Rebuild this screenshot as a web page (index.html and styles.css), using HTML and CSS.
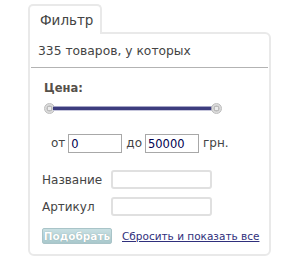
FILE: index.html
```html
<!DOCTYPE html>
<html>
<head>
<meta charset="utf-8">
<link rel="stylesheet" href="styles.css">
</head>
<body>
<div class="filter">
  <div class="tab">Фильтр</div>
  <div class="panel">
    <div class="count">335 товаров, у которых</div>
    <div class="price">
      <div class="price-label">Цена:</div>
      <div class="slider"><span class="knob"></span><span class="track"></span><span class="knob"></span></div>
      <div class="range">
        <span class="rl">от</span>
        <input class="num" type="text" value="0">
        <span class="rl">до</span>
        <input class="num" type="text" value="50000">
        <span class="rl">грн.</span>
      </div>
    </div>
    <div class="fields">
      <label class="flabel">Название</label><input class="field" type="text">
      <label class="flabel">Артикул</label><input class="field" type="text">
    </div>
    <div class="actions">
      <button class="btn" type="button">Подобрать</button>
      <a class="reset" href="#">Сбросить и показать все</a>
    </div>
  </div>
</div>
</body>
</html>
```

FILE: styles.css
```css
* { box-sizing: border-box; }
html, body { margin: 0; padding: 0; background: #fff; }
body { font-family: "DejaVu Sans", Verdana, sans-serif; color: #444; }

.filter { width: 243px; margin: 4px 0 0 28px; }

.tab {
  position: relative;
  z-index: 1;
  display: inline-block;
  width: 74px;
  height: 30px;
  margin-bottom: -2px;
  padding: 6px 0 0 10px;
  border: 2px solid #e9e9e9;
  border-bottom: none;
  border-radius: 5px 5px 0 0;
  background: #fff;
  font-size: 13.5px;
  line-height: 16px;
  color: #444;
}

.panel {
  height: 224px;
  border: 2px solid #e9e9e9;
  border-radius: 0 6px 6px 6px;
  padding: 10px 1px 0 1px;
}

.count {
  font-size: 12.3px;
  line-height: 15px;
  padding-left: 7px;
  padding-bottom: 8px;
  border-bottom: 1px solid #b3b3b3;
}

.price { padding: 13px 0 0 13px; }
.price-label {
  font-size: 11.5px;
  font-weight: bold;
  line-height: 14px;
  color: #555049;
}

.slider {
  display: flex;
  align-items: center;
  width: 178px;
  height: 12px;
  margin-top: 7px;
}
.knob {
  flex: none;
  width: 11px;
  height: 11px;
  border-radius: 50%;
  border: 1px solid #bdbdbd;
  background: radial-gradient(circle, #ececec 0 1.5px, #bcbcbc 2px 2.8px, #dcdcdc 3.3px);
}
.track {
  flex: 1;
  height: 5px;
  margin: 0 -2px;
  background: #3d3d7e;
  border-top: 1px solid #a5a5c6;
  border-bottom: 1px solid #c6c6dc;
}

.range {
  display: flex;
  align-items: center;
  margin-top: 20px;
  padding-left: 7px;
  font-size: 12px;
  color: #444;
}
.rl { line-height: 19px; }
.num {
  width: 54px;
  height: 19px;
  margin: 0 4px 0 3px;
  padding: 0 2px;
  border: 1px solid #a8a8a8;
  border-radius: 0;
  font-family: "DejaVu Sans", Verdana, sans-serif;
  font-size: 11.5px;
  color: #000050;
  outline: none;
}

.fields {
  display: grid;
  grid-template-columns: 69px 101px;
  row-gap: 8px;
  align-items: center;
  padding: 17px 0 0 11px;
}
.flabel { font-size: 12px; color: #444; }
.field {
  width: 101px;
  height: 19px;
  border: 2px solid #e0e0e0;
  border-radius: 3px;
  outline: none;
}

.actions {
  display: flex;
  align-items: center;
  padding: 12px 0 0 11px;
}
.btn {
  width: 70px;
  height: 16px;
  padding: 0;
  border: 1px solid #a9c4c8;
  border-radius: 2px;
  background: linear-gradient(#c9e0e3, #a9c8cc);
  color: #fff;
  font-family: "DejaVu Sans", Verdana, sans-serif;
  font-size: 10.5px;
  font-weight: bold;
  line-height: 14px;
  text-shadow: 0 0 1px #7a9a9e;
}
.reset {
  margin-left: 10px;
  font-size: 10.5px;
  color: #2f2f7c;
  text-decoration: underline;
}
```
